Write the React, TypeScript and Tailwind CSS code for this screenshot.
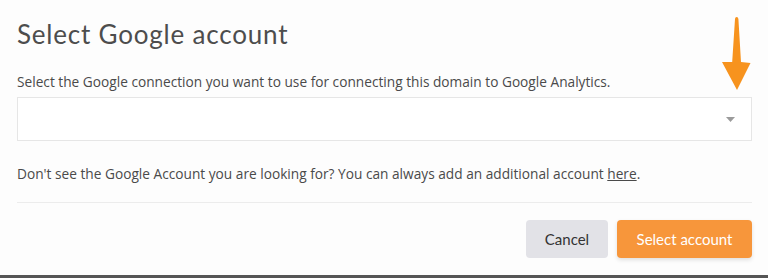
import React from 'react'

function Caret() {
  return (
    <svg width="9" height="5" viewBox="0 0 9 5" className="absolute right-[16px] top-[19px]">
      <polygon points="0,0 9,0 4.5,5" fill="#9b9b9b" />
    </svg>
  )
}

function OrangeArrow() {
  return (
    <svg width="30" height="76" viewBox="0 0 30 76" className="absolute left-[721px] top-[15px]">
      <path d="M15.6 2 Q17.2 2 17.4 4 L20 47 L29.5 48 L16 75 L1 47 L11.2 47 L14 4 Q14.2 2 15.6 2 Z" fill="#f7931e" />
    </svg>
  )
}

export default function App() {
  return (
    <main className="relative w-[768px] h-[278px] overflow-hidden bg-[#fdfdfd] flex flex-col" style={{ fontFamily: '"Open Sans", sans-serif' }}>
      <OrangeArrow />

      <div className="px-[17px] flex flex-col">
        {/* Header */}
        <h1 className="mt-[16px] h-[36px] leading-[36px] text-[26px] font-normal text-[#4d4d4d] tracking-[0.8px]" style={{ fontFamily: 'Lato, sans-serif' }}>
          Select Google account
        </h1>

        <p className="mt-[20px] h-[20px] leading-[20px] text-[13.7px] text-[#4a4a4a]">
          Select the Google connection you want to use for connecting this domain to Google Analytics.
        </p>

        {/* Select */}
        <div className="relative mt-[5px] w-[735px] h-[44px] bg-white border border-[#e6e6e6]">
          <Caret />
        </div>

        <p className="mt-[23px] h-[20px] leading-[20px] text-[13.7px] text-[#4a4a4a]">
          Don't see the Google Account you are looking for? You can always add an additional account{' '}
          <a className="underline text-[#4a4a4a]">here</a>.
        </p>

        <div className="mt-[18px] w-[735px] border-t border-[#ececec]" />

        {/* Footer */}
        <div className="mt-[17px] w-[735px] flex justify-end gap-[9px]" style={{ fontFamily: 'Lato, sans-serif' }}>
          <button className="w-[82px] h-[38px] rounded-[4px] bg-[#e2e2e7] text-[15px] text-[#333]">
            Cancel
          </button>
          <button className="w-[135px] h-[38px] rounded-[4px] bg-[#f7963b] text-[15px] text-white shadow-[0_2px_4px_rgba(0,0,0,0.12)]">
            Select account
          </button>
        </div>
      </div>

      <div className="mt-auto h-[3px] bg-[#555]" />
    </main>
  )
}
